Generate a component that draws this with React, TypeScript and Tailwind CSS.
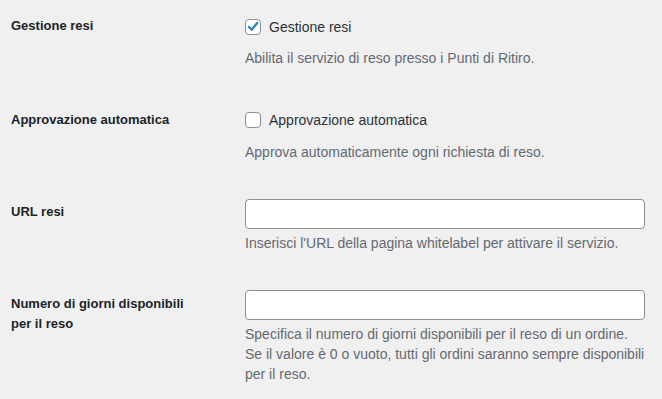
const font = { fontFamily: '"Liberation Sans", Arial, sans-serif' };

function Check({ checked }: { checked: boolean }) {
  return (
    <span className="flex h-4 w-4 shrink-0 items-center justify-center rounded-[4px] border border-[#8c8f94] bg-white">
      {checked && (
        <svg viewBox="0 0 16 16" className="h-4 w-4">
          <path
            d="M3.4 7.9 L6.5 11.2 L12.8 3.4"
            fill="none"
            stroke="#3582c4"
            strokeWidth="2.7"
            strokeLinecap="round"
            strokeLinejoin="round"
          />
        </svg>
      )}
    </span>
  );
}

function Label({ children, pt }: { children: React.ReactNode; pt: string }) {
  return (
    <div className={`w-[234px] shrink-0 text-[13px] font-bold leading-5 text-[#1d2327] ${pt}`}>
      {children}
    </div>
  );
}

export default function App() {
  return (
    <div className="h-[399px] w-[662px] overflow-hidden bg-[#f0f0f1] pl-[11px]" style={font}>
      <div className="flex h-[94px]">
        <Label pt="pt-4">Gestione resi</Label>
        <div className="pt-[17px]">
          <label className="flex h-5 items-center gap-2 text-sm text-[#2c3338]">
            <Check checked />
            Gestione resi
          </label>
          <p className="mt-[11px] text-sm leading-5 text-[#646970]">
            Abilita il servizio di reso presso i Punti di Ritiro.
          </p>
        </div>
      </div>

      <div className="flex h-[91px]">
        <Label pt="pt-4">Approvazione automatica</Label>
        <div className="pt-[16px]">
          <label className="flex h-5 items-center gap-2 text-sm text-[#2c3338]">
            <Check checked={false} />
            Approvazione automatica
          </label>
          <p className="mt-[12px] text-sm leading-5 text-[#646970]">
            Approva automaticamente ogni richiesta di reso.
          </p>
        </div>
      </div>

      <div className="flex h-[91px]">
        <Label pt="pt-[17px]">URL resi</Label>
        <div className="pt-[14px]">
          <input
            type="text"
            className="block h-[30px] w-[400px] rounded-[4px] border border-[#8c8f94] bg-white px-2 text-sm outline-none"
          />
          <p className="mt-1 text-sm leading-5 text-[#646970]">
            Inserisci l'URL della pagina whitelabel per attivare il servizio.
          </p>
        </div>
      </div>

      <div className="flex">
        <Label pt="pt-[18px]">
          Numero di giorni disponibili
          <br />
          per il reso
        </Label>
        <div className="pt-[14px]">
          <input
            type="text"
            className="block h-[30px] w-[400px] rounded-[4px] border border-[#8c8f94] bg-white px-2 text-sm outline-none"
          />
          <p className="mt-1 whitespace-nowrap text-sm leading-5 text-[#646970]">
            Specifica il numero di giorni disponibili per il reso di un ordine.
            <br />
            Se il valore è 0 o vuoto, tutti gli ordini saranno sempre disponibili
            <br />
            per il reso.
          </p>
        </div>
      </div>
    </div>
  );
}
